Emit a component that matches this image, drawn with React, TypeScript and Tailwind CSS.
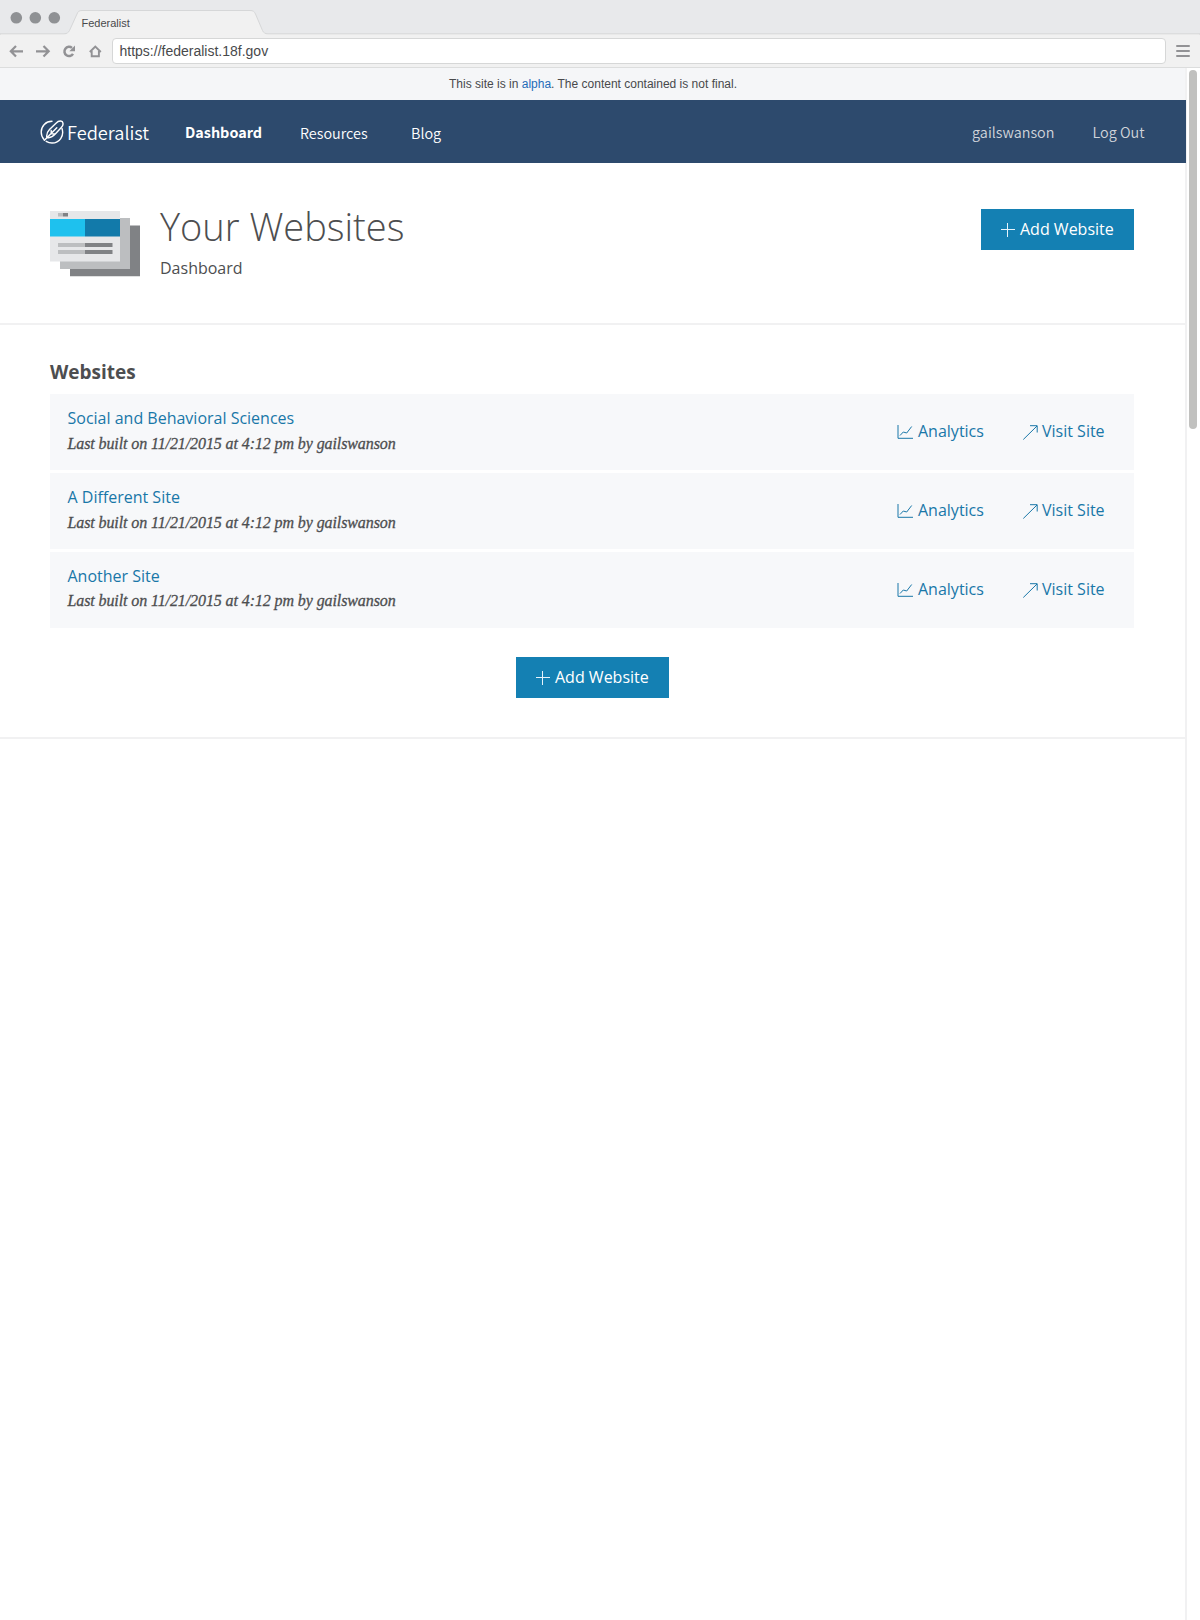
import React from "react";

const sites = ["Social and Behavioral Sciences", "A Different Site", "Another Site"];

function BrowserChrome() {
  return (
    <header className="h-[68px] bg-[#f1f1f1] border-b border-[#dcdddd] font-['Liberation_Sans',sans-serif]">
      <div className="relative flex h-[34px] items-start bg-[#e8e9eb]">
        <svg className="absolute left-0 top-0" width="1200" height="35" viewBox="0 0 1200 35">
          <path d="M0 33.8H64C67 33.8 68.500 32.500 69.500 30.500L77 14C78 11.500 79 10.500 82 10.500H250C253 10.500 254.500 11.500 255.500 14L262.500 30.500C263.500 32.800 265 33.800 268 33.800H1200V36H0Z" fill="#f1f1f1" stroke="#d6d7d8" />
          <path d="M67 35H265" stroke="#f1f1f1" strokeWidth="2.500" />
          <circle cx="16.300" cy="17.800" r="5.800" fill="#8f9194" />
          <circle cx="35.300" cy="17.800" r="5.800" fill="#8f9194" />
          <circle cx="54.300" cy="17.800" r="5.800" fill="#8f9194" />
        </svg>
        <span className="relative ml-[81.500px] mt-[15px] text-[11px] leading-4 text-[#48494b]">Federalist</span>
      </div>
      <div className="flex h-[33px] items-center">
        <svg width="112" height="33" viewBox="0 0 112 33" fill="none" stroke="#929295" strokeWidth="2.200">
          <path d="M23 17.300H11M16 12L10.800 17.300L16 22.600" />
          <path d="M36 17.300H49M43.500 12L48.700 17.300L43.500 22.600" />
          <path d="M73 19.800A4.600 4.600 0 1 1 72 13.900" strokeWidth="2.500" />
          <path d="M75 11.500V17.200H69.300Z" fill="#929295" stroke="none" />
          <path d="M89.800 18L95.300 12.600L100.800 18M91.700 17V22.200H98.900V17" strokeWidth="1.900" />
        </svg>
        <div className="mt-[1px] h-[26px] w-[1054px] rounded border border-[#d6d7d7] bg-white pl-[6.500px] text-[14px] leading-[24px] text-[#48494b]">
          https://federalist.18f.gov
        </div>
        <div className="ml-[10px] mt-[1px] flex w-[14px] flex-col gap-[3px]">
          <i className="h-[2px] rounded bg-[#929295]" />
          <i className="h-[2px] rounded bg-[#929295]" />
          <i className="h-[2px] rounded bg-[#929295]" />
        </div>
      </div>
    </header>
  );
}

function Logo() {
  return (
    <svg width="24" height="24" viewBox="0 0 24 24" fill="none" stroke="white" strokeWidth="1.400" strokeLinecap="round">
      <path d="M12 1.300C5.800 1.300 1.200 6 1.200 12C1.200 15 2.200 17.500 4 19.400" />
      <path d="M22 8.500C24.500 16 19.500 23 12 23C9.800 23 7.800 22.300 6.200 21.300" />
      <path d="M4.400 20.300L16.800 7.700M6.800 17.400C6.200 13.800 7.300 11.800 9.500 9.500L16 3.200C17.800 1.400 20.500 .700 22.300 1.600C23.500 3.500 23 5.800 21.300 7.500L15.500 13.800C13 16.600 10.500 18.300 7.200 17.500M11.200 13.200V10.500M11 13.900H15" />
    </svg>
  );
}

function NavBar() {
  return (
    <nav className="mr-[-1px] flex h-[63px] items-center bg-[#2d4a6d] text-[14.400px] font-[350] leading-[24px] text-white font-['Noto_Sans_CJK_SC',sans-serif]">
      <div className="ml-[39.500px] flex w-[145.500px] items-center">
        <Logo />
        <span className="ml-[3.500px] text-[18.200px]">Federalist</span>
      </div>
      <span className="w-[115px] font-bold">Dashboard</span>
      <span className="mt-[2px] w-[111px]">Resources</span>
      <span className="mt-[2px]">Blog</span>
      <span className="ml-auto mr-[38px] text-[#d0d4da]">gailswanson</span>
      <span className="mr-[41.500px] text-[#d0d4da]">Log Out</span>
    </nav>
  );
}

function AddButton() {
  return (
    <button className="flex h-[41px] w-[153px] items-center bg-[#1480b3] pl-[20px] text-[16px] text-white">
      <svg className="mr-[5px]" width="14" height="14" viewBox="0 0 14 14" stroke="#e6f3fb">
        <path d="M0 6.500H14M6.500 0V14" />
      </svg>
      <span className="mb-[2px]">Add Website</span>
    </button>
  );
}

function WebsitesIcon() {
  return (
    <svg width="90" height="66" viewBox="0 0 90 66">
      <path fill="#808285" d="M20 14.500H90V65.300H20z" />
      <path fill="#bcbec0" d="M10 7H80V58H10z" />
      <path fill="#e6e7e9" d="M0 0H70V50.500H0z" />
      <path fill="#1ec1ee" d="M0 8H35V25.500H0z" />
      <path fill="#127aaa" d="M35 8H70V25.500H35z" />
      <path fill="#bcbec0" d="M8 2H13V5.500H8zM8 32H35V36H8zM8 39H35V43H8z" />
      <path fill="#808285" d="M13 2H18V5.500H13zM35 32H62.500V36H35zM35 39H62.500V43H35z" />
    </svg>
  );
}

function SiteRow({ name }: { name: string }) {
  return (
    <li className="group flex h-[76px] items-start bg-[#f7f8fa] pl-[17.500px]">
      <div className="flex-1 pt-[12px]">
        <div className="h-[26px] text-[16px] leading-6 text-[#1977a8] group-last:h-[25px]">{name}</div>
        <div className="text-[16px] italic leading-6 tracking-[-0.1px] text-[#4d4e50] [-webkit-text-stroke:0.3px_#4d4e50] font-['Liberation_Serif',serif]">
          Last built on 11/21/2015 at 4:12 pm by gailswanson
        </div>
      </div>
      <a className="mt-[25px] flex w-[126px] items-center text-[16px] leading-6 text-[#1977a8]">
        <svg className="mr-[5px] mt-[2px]" width="16" height="14" viewBox="0 0 16 14" fill="none" stroke="#1977a8">
          <path d="M1 0V13.300H16M3 10.500L6.300 7L9.700 8L14.700 1.500" />
        </svg>
        Analytics
      </a>
      <a className="mt-[25px] flex w-[111px] items-center text-[16px] leading-6 text-[#1977a8]">
        <svg className="mr-[4px] mt-[2px]" width="15" height="15" viewBox="0 0 15 15" fill="none" stroke="#1977a8">
          <path d="M.300 14.500L14 1M7 .700H14.200V7.500" />
        </svg>
        Visit Site
      </a>
    </li>
  );
}

export default function App() {
  return (
    <div className="flex h-[1620px] w-[1200px] flex-col overflow-hidden bg-white font-['Open_Sans',sans-serif] text-[#4d4e50]">
      <BrowserChrome />
      <div className="flex min-h-0 flex-1">
        <main className="w-[1187px] border-r-2 border-[#f1f1f2]">
          <p className="h-[32px] bg-[#f5f6f8] pl-[1px] text-center text-[12px] leading-[32px] text-[#48494b] font-['Liberation_Sans',sans-serif]">
            This site is in <span className="text-[#1f6cb8]">alpha</span>. The content contained is not final.
          </p>
          <NavBar />
          <section className="flex h-[162px] items-start border-b-2 border-[#f1f1f2] pl-[50px] pr-[51px]">
            <div className="mt-[48px]"><WebsitesIcon /></div>
            <div className="ml-[20px] mt-[37px] flex-1">
              <h1 className="text-[38px] font-light leading-[52px]">Your Websites</h1>
              <p className="mt-[4px] text-[16px] leading-6">Dashboard</p>
            </div>
            <div className="mt-[46px]"><AddButton /></div>
          </section>
          <section className="h-[414px] border-b-2 border-[#f1f1f2] pl-[50px] pr-[51px] pt-[31px]">
            <h2 className="h-[38px] text-[19px] font-bold leading-[32px]">Websites</h2>
            <ul className="flex flex-col gap-[3px]">
              {sites.map((name) => <SiteRow key={name} name={name} />)}
            </ul>
            <div className="ml-[1px] mt-[29px] flex justify-center"><AddButton /></div>
          </section>
        </main>
        <div className="ml-[2px] mt-[2px] h-[359px] w-[8px] rounded-full bg-[#c1c1bf]" />
      </div>
    </div>
  );
}
